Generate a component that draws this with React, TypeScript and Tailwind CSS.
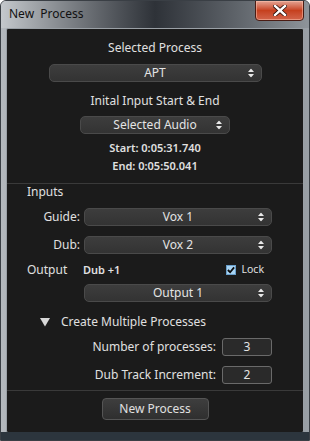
import React from "react";

const font = { fontFamily: '"Noto Sans", "Open Sans", sans-serif' };

function Arrows() {
  return (
    <svg width="6" height="9" viewBox="0 0 6 9" className="shrink-0">
      <path d="M3 0 L6 3.5 L0 3.5 Z" fill="#e8e8e8" />
      <path d="M3 9 L6 5.5 L0 5.5 Z" fill="#e8e8e8" />
    </svg>
  );
}

function Select({ label, w, h = "h-[18px]" }: { label: string; w: string; h?: string }) {
  return (
    <div
      className={`relative flex items-center justify-center ${w} ${h} rounded-[5px] border border-[#4a4a4a] bg-gradient-to-b from-[#3d3d3d] to-[#333333] text-[12px] text-[#e4e4e4]`}
    >
      <span className="leading-none">{label}</span>
      <div className="absolute right-[7px] top-1/2 -translate-y-1/2 flex">
        <Arrows />
      </div>
    </div>
  );
}

function NumBox({ v }: { v: string }) {
  return (
    <div className="flex h-[18px] w-[50px] items-center justify-center rounded-[3px] border border-[#6a6a6a] bg-[#2a2a2a] text-[12px] text-[#e4e4e4]">
      {v}
    </div>
  );
}

export default function App() {
  return (
    <div
      className="relative h-[441px] w-[310px] overflow-hidden rounded-t-[6px] border border-[#3a3f45] bg-gradient-to-r from-[#b4b9be] via-[#5a6068] to-[#9aa0a6]"
      style={font}
    >
      {/* title bar */}
      <div className="flex h-[27px] items-center bg-gradient-to-r from-[#c4c8cc] via-[#2e3238] to-[#8e949a] pl-[8px]">
        <span className="text-[12px] text-[#111] -mt-[2px]">New&nbsp;&nbsp;Process</span>
      </div>
      <div className="absolute right-[5px] top-[-1px] flex h-[21px] w-[49px] items-center justify-center rounded-b-[4px] border border-[#4a1c14] bg-gradient-to-b from-[#e3a393] via-[#c6401e] to-[#d2644a] shadow-[inset_0_0_0_1px_rgba(255,200,180,0.5)]">
        <svg width="14" height="11" viewBox="0 0 14 11">
          <path d="M2 1 L12 10 M12 1 L2 10" stroke="#2a0d08" strokeWidth="4" strokeLinecap="square" />
          <path d="M2 1 L12 10 M12 1 L2 10" stroke="#ffffff" strokeWidth="2.4" strokeLinecap="square" />
        </svg>
      </div>

      <div className="mx-[5px] flex h-[405px] flex-col rounded-[2px] border border-[#9aa0a6] bg-[#1b1b1b] text-[#e0e0e0]">
        <div className="mt-[11px] text-center text-[12px] leading-[16px]">Selected Process</div>
        <div className="mt-[8px] flex justify-center">
          <Select label="APT" w="w-[213px]" />
        </div>
        <div className="mt-[11px] text-center text-[12px] leading-[16px]">Inital Input Start &amp; End</div>
        <div className="mt-[7px] flex justify-center">
          <Select label="Selected Audio" w="w-[150px]" />
        </div>
        <div className="mt-[7px] text-center text-[11px] font-semibold leading-[14px]">Start: 0:05:31.740</div>
        <div className="mt-[4px] text-center text-[11px] font-semibold leading-[14px]">End: 0:05:50.041</div>
        <div className="mt-[10px] h-px bg-[#3a3a3a]" />
        <div className="pl-[20px] text-[12px] leading-[16px] mt-[0px]">Inputs</div>
        <div className="mt-[8px] flex items-center">
          <div className="w-[77px] pr-[4px] text-right text-[12px]">Guide:</div>
          <Select label="Vox 1" w="w-[188px]" />
        </div>
        <div className="mt-[10px] flex items-center">
          <div className="w-[77px] pr-[4px] text-right text-[12px]">Dub:</div>
          <Select label="Vox 2" w="w-[188px]" />
        </div>
        <div className="mt-[8px] flex h-[16px] items-center">
          <div className="w-[56px] pl-[20px] text-[12px]">Output</div>
          <div className="ml-[20px] text-[11px] font-semibold">Dub +1</div>
          <div className="ml-auto mr-[39px] flex items-center gap-[5px]">
            <div className="flex h-[10px] w-[10px] items-center justify-center bg-[#a8d4f4] border border-[#6aa0cc]">
              <svg width="9" height="8" viewBox="0 0 9 8">
                <path d="M1 4 L3.5 6.5 L8 1" stroke="#0a0a0a" strokeWidth="2" fill="none" />
              </svg>
            </div>
            <span className="text-[10.5px]">Lock</span>
          </div>
        </div>
        <div className="mt-[6px] flex">
          <div className="w-[77px]" />
          <Select label="Output 1" w="w-[188px]" />
        </div>
        <div className="mt-[12px] flex h-[16px] items-center pl-[33px] text-[12px]">
          <svg width="10" height="9" viewBox="0 0 10 9" className="mr-[11px]">
            <path d="M0 0 L10 0 L5 8.5 Z" fill="#d8d8d8" />
          </svg>
          <span>Create Multiple Processes</span>
        </div>
        <div className="mt-[8px] flex items-center justify-end pr-[31px]">
          <span className="mr-[6px] text-[12px]">Number of processes:</span>
          <NumBox v="3" />
        </div>
        <div className="mt-[10px] flex items-center justify-end pr-[31px]">
          <span className="mr-[6px] text-[12px]">Dub Track Increment:</span>
          <NumBox v="2" />
        </div>
        <div className="mt-[6px] h-px bg-[#3a3a3a]" />
        <div className="mt-[7px] flex justify-center">
          <div className="flex h-[22px] w-[107px] items-center justify-center rounded-[4px] border border-[#555] bg-gradient-to-b from-[#3e3e3e] to-[#2f2f2f] text-[12px]">
            New Process
          </div>
        </div>
      </div>
      <div className="absolute bottom-0 left-0 right-0 h-[8px] bg-[#2c353d]" />
    </div>
  );
}
